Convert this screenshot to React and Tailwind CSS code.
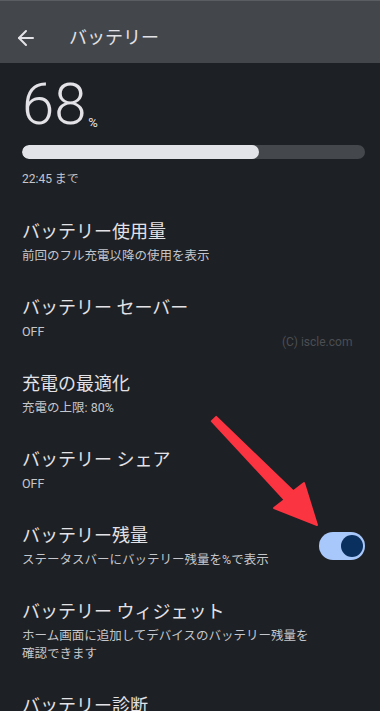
import React from 'react';
import { ArrowLeft } from 'lucide-react';

const items = [
  { title: 'バッテリー使用量', sub: '前回のフル充電以降の使用を表示' },
  { title: 'バッテリー セーバー', sub: 'OFF' },
  { title: '充電の最適化', sub: '充電の上限: 80%' },
  { title: 'バッテリー シェア', sub: 'OFF' },
  { title: 'バッテリー残量', sub: 'ステータスバーにバッテリー残量を%で表示', toggle: true },
  { title: 'バッテリー ウィジェット', sub: 'ホーム画面に追加してデバイスのバッテリー残量を\n確認できます' },
  { title: 'バッテリー診断', sub: '' },
];

function Toggle() {
  return (
    <div className="w-[46px] h-[28px] rounded-full bg-[#a8c7fa] flex items-center justify-end pr-[2px] shrink-0">
      <div className="w-[22px] h-[22px] rounded-full bg-[#0a305f]" />
    </div>
  );
}

function Arrow() {
  return (
    <svg className="absolute left-0 top-0 pointer-events-none" width="380" height="711" viewBox="0 0 380 711">
      <polygon
        points="211.8,421.1 216.2,416.9 293.3,491.3 304,483 317,525 274,508 284.7,499.7"
        fill="#fb3441"
        stroke="#fb3441"
        strokeWidth="2"
        strokeLinejoin="round"
      />
    </svg>
  );
}

export default function App() {
  return (
    <div
      className="relative w-[380px] h-[711px] overflow-hidden bg-[#1d2024] text-[#e3e2e6]"
      style={{ fontFamily: 'Roboto, "Noto Sans CJK JP", sans-serif' }}
    >
      <header className="h-[63px] bg-[#43474c] border-t border-[#5a5d62] flex items-center pt-[12px]">
        <div className="w-[69px] flex items-center pl-[14px]">
          <ArrowLeft size={24} strokeWidth={2} className="text-[#e3e2e6]" />
        </div>
        <h1 className="text-[18px] leading-[24px] text-[#e3e2e6]">バッテリー</h1>
      </header>

      <main className="pl-[22px] pr-[15px]">
        <div className="mt-[12px] flex items-end">
          <span className="text-[58px] leading-[58px] font-light">68</span>
          <span className="text-[13px] leading-[16px] ml-[2px] mb-[2px]">%</span>
        </div>
        <div className="mt-[12px] h-[14px] rounded-full bg-[#44474c] overflow-hidden">
          <div className="h-full rounded-full bg-[#e2e2e9]" style={{ width: '69%' }} />
        </div>
        <p className="mt-[12px] text-[12px] leading-[16px] text-[#c4c6cc]">22:45 まで</p>

        <ul className="mt-[17px]">
          {items.map((it) => (
            <li key={it.title} className="py-[15px] flex items-center gap-4">
              <div className="flex-1">
                <div className="text-[18px] leading-[26px] text-[#e3e2e6]">{it.title}</div>
                {it.sub && (
                  <div className="mt-[2px] text-[12.5px] leading-[18px] text-[#c4c6cc] whitespace-pre-line">
                    {it.sub}
                  </div>
                )}
              </div>
              {it.toggle && <Toggle />}
            </li>
          ))}
        </ul>
      </main>

      <div className="absolute left-[282px] top-[334px] text-[12px] leading-[16px] text-[#4b4e53]">
        (C) iscle.com
      </div>
      <Arrow />
    </div>
  );
}
